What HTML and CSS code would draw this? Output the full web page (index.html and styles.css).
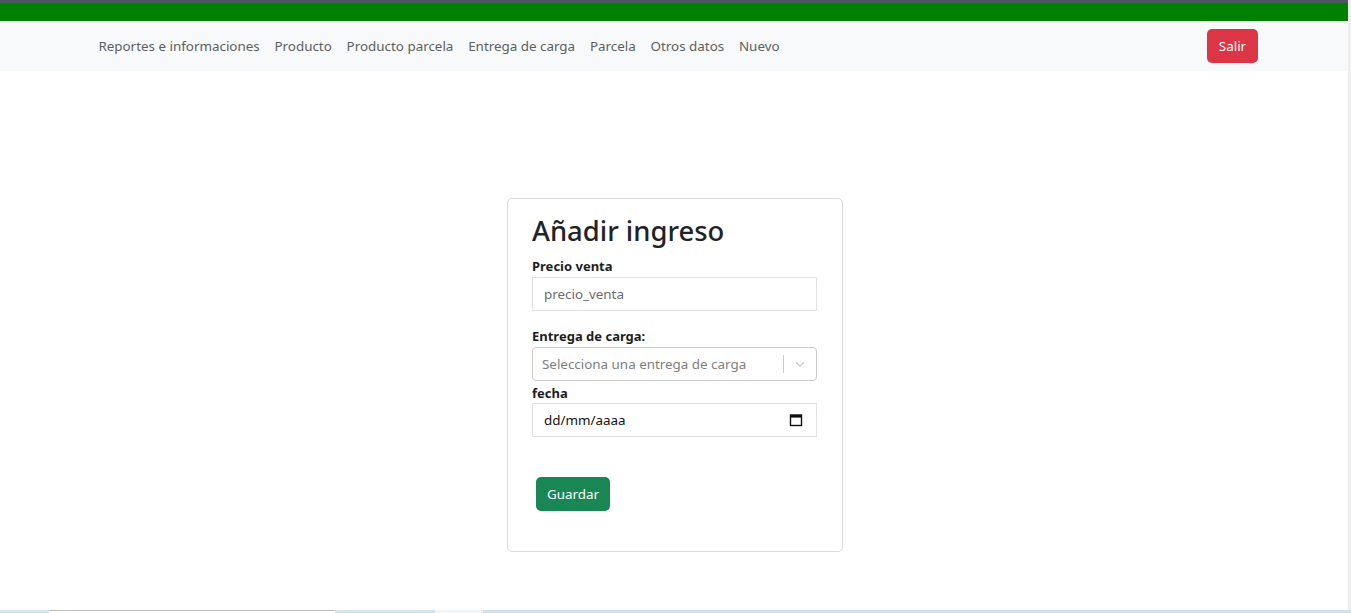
FILE: index.html
```html
<!DOCTYPE html>
<html lang="es">
<head>
<meta charset="utf-8">
<title>Añadir ingreso</title>
<link rel="stylesheet" href="styles.css">
</head>
<body>
<div class="screen">
  <div class="window">
    <div class="page">
      <div class="topline"></div>
      <div class="greenbar"></div>
      <nav class="navbar">
        <ul class="nav">
          <li><a href="#">Reportes e informaciones</a></li>
          <li><a href="#">Producto</a></li>
          <li><a href="#">Producto parcela</a></li>
          <li><a href="#">Entrega de carga</a></li>
          <li><a href="#">Parcela</a></li>
          <li><a href="#">Otros datos</a></li>
          <li><a href="#">Nuevo</a></li>
        </ul>
        <button class="btn btn-danger">Salir</button>
      </nav>
      <main class="content">
        <form class="card">
          <h2 class="title">Añadir ingreso</h2>
          <label class="label">Precio venta</label>
          <div class="input"><span class="placeholder">precio_venta</span></div>
          <label class="label label-gap">Entrega de carga:</label>
          <div class="select">
            <span class="select-ph">Selecciona una entrega de carga</span>
            <span class="sep"></span>
            <span class="chev">
              <svg width="14" height="14" viewBox="0 0 20 20"><path d="M4.5 7.5 L10 13 L15.5 7.5" fill="none" stroke="#c8c8c8" stroke-width="1.8"/></svg>
            </span>
          </div>
          <label class="label label-tight">fecha</label>
          <div class="input date">
            <span class="datetext">dd/mm/aaaa</span>
            <svg width="14" height="14" viewBox="0 0 14 14"><rect x="1.5" y="2" width="11" height="10.5" fill="none" stroke="#111" stroke-width="1.4"/><rect x="1.5" y="2" width="11" height="2.6" fill="#111"/></svg>
          </div>
          <div class="actions"><button type="button" class="btn btn-success">Guardar</button></div>
        </form>
      </main>
    </div>
    <div class="scrollbar"></div>
  </div>
  <div class="taskbar">
    <span class="tb1"></span><span class="tb2"></span><span class="tb3"></span><span class="tb4"></span><span class="tb5"></span>
  </div>
</div>
</body>
</html>
```

FILE: styles.css
```css
* { box-sizing: border-box; }
html, body { margin: 0; padding: 0; }
body {
  font-family: "Noto Sans", "Open Sans", "Liberation Sans", sans-serif;
  color: #212529;
  background: #fff;
}
.screen { width: 1351px; height: 613px; display: flex; flex-direction: column; overflow: hidden; }
.window { flex: 1; display: flex; min-height: 0; }
.page { flex: 1; display: flex; flex-direction: column; }
.scrollbar { width: 3px; background: #eeeeee; }
.topline { height: 3px; background: #4b5662; }
.greenbar { height: 18px; background: #008000; }
.navbar {
  height: 50px;
  background: #f8f9fa;
  display: flex;
  align-items: center;
  padding: 0 90px 0 91px;
}
.nav { list-style: none; margin: 0; padding: 0; display: flex; flex: 1; }
.nav a {
  display: block;
  padding: 0 7.4px;
  font-size: 13.4px;
  color: #5c5f62;
  text-decoration: none;
  line-height: 22px;
}
.btn {
  border: none;
  border-radius: 5px;
  color: #fff;
  font-family: inherit;
  font-size: 13.4px;
  height: 34px;
  padding: 0 12px;
  cursor: pointer;
}
.btn-danger { background: #dc3545; width: 51px; padding: 0; }
.btn-success { background: #198754; width: 74px; padding: 0; }
.content { flex: 1; display: flex; justify-content: center; padding-top: 127px; }
.card {
  width: 336px;
  height: 354px;
  border: 1px solid #dcdcdc;
  border-radius: 5px;
  padding: 13px 24px 0 24px;
  display: flex;
  flex-direction: column;
  margin-left: 2px;
}
.title { margin: 0; font-size: 27.4px; font-weight: 500; line-height: 38px; color: #1f2327; }
.label { font-size: 13px; font-weight: 700; line-height: 18px; margin-top: 7px; margin-bottom: 2px; color: #1d1d1d; }
.label-gap { margin-top: 16px; margin-bottom: 2px; }
.label-tight { margin-top: 3px; margin-bottom: 1px; }
.input {
  width: 285px;
  height: 34px;
  border: 1px solid #dee2e6;
  display: flex;
  align-items: center;
  padding: 0 11px;
  font-size: 13.4px;
}
.placeholder { color: #6c6c6c; }
.select {
  width: 285px;
  height: 34px;
  border: 1px solid #cccccc;
  border-radius: 4px;
  display: flex;
  align-items: center;
  padding-left: 9px;
  font-size: 13.4px;
}
.select-ph { flex: 1; color: #808080; }
.sep { width: 1px; height: 18px; background: #cccccc; }
.chev { width: 32px; display: flex; justify-content: center; align-items: center; }
.date { justify-content: space-between; padding-right: 13px; }
.datetext { color: #111; }
.actions { padding: 40px 0 0 4px; }
.taskbar { height: 3px; display: flex; background: #d3e4ec; }
.taskbar span { display: block; height: 3px; }
.tb1 { width: 49px; background: #d3e5ec; }
.tb2 { width: 286px; background: #ffffff; border-top: 1px solid #bcbcbc; }
.tb3 { width: 100px; background: #d3e5ec; }
.tb4 { width: 48px; background: #eef5f8; }
.tb5 { flex: 1; background: #d1e1ec; }
```
